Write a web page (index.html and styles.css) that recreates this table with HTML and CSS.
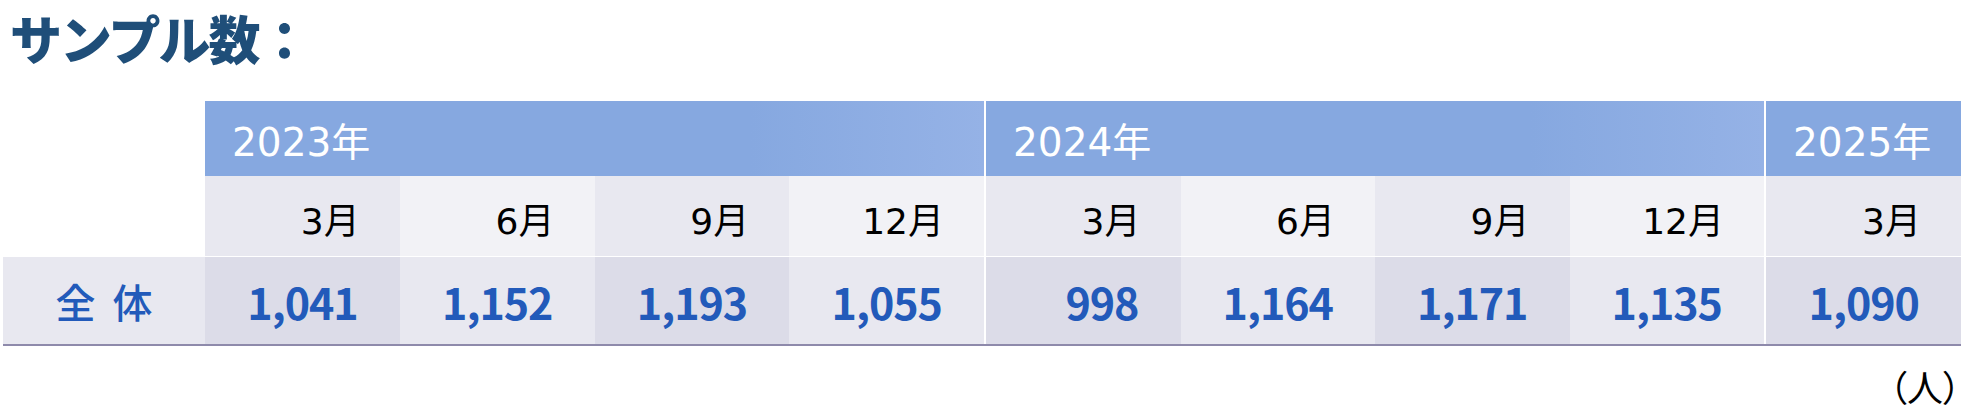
FILE: index.html
```html
<!DOCTYPE html>
<html lang="ja">
<head>
<meta charset="utf-8">
<link rel="stylesheet" href="styles.css">
</head>
<body>
<h1 class="title">サンプル数：</h1>
<div class="table">
  <div class="labelcol">
    <div class="spacer"></div>
    <div class="label">全 体</div>
  </div>
  <div class="group g2023">
    <div class="year">2023年</div>
    <div class="months">
      <div class="m a">3月</div><div class="m b">6月</div><div class="m a">9月</div><div class="m b">12月</div>
    </div>
    <div class="data">
      <div class="d a">1,041</div><div class="d b">1,152</div><div class="d a">1,193</div><div class="d b">1,055</div>
    </div>
  </div>
  <div class="group g2024">
    <div class="year">2024年</div>
    <div class="months">
      <div class="m a">3月</div><div class="m b">6月</div><div class="m a">9月</div><div class="m b">12月</div>
    </div>
    <div class="data">
      <div class="d a">998</div><div class="d b">1,164</div><div class="d a">1,171</div><div class="d b">1,135</div>
    </div>
  </div>
  <div class="group g2025">
    <div class="year plain">2025年</div>
    <div class="months">
      <div class="m a">3月</div>
    </div>
    <div class="data">
      <div class="d a">1,090</div>
    </div>
  </div>
</div>
<div class="unit">（人）</div>
</body>
</html>
```
FILE: styles.css
```css
html, body {
  margin: 0;
  padding: 0;
  background: #ffffff;
}
body {
  width: 1967px;
  height: 419px;
  overflow: hidden;
  font-family: "Noto Sans CJK JP", "Noto Sans", sans-serif;
}
.title {
  margin: 0;
  padding: 0 0 0 10px;
  height: 95px;
  box-sizing: border-box;
  font-size: 52px;
  line-height: 76px;
  font-weight: 900;
  letter-spacing: -2px;
  color: #1f4e79;
}
.table {
  display: flex;
  margin-top: 6px;
  margin-left: 3px;
  width: 1958px;
  border-bottom: 2px solid #8e8aab;
}
.labelcol {
  width: 202px;
  display: flex;
  flex-direction: column;
}
.spacer {
  height: 156px;
}
.label {
  height: 87px;
  background: #e8e8f0;
  color: #225aba;
  font-size: 40px;
  font-weight: 500;
  letter-spacing: 4px;
  display: flex;
  align-items: center;
  justify-content: center;
  padding-left: 4px;
}
.group {
  display: flex;
  flex-direction: column;
}
.g2023 { width: 779px; }
.g2024 { width: 778px; margin-left: 2px; }
.g2025 { width: 195px; margin-left: 2px; }
.year {
  height: 75px;
  box-sizing: border-box;
  padding-left: 27px;
  display: flex;
  align-items: center;
  color: #ffffff;
  font-family: "DejaVu Sans", "Noto Sans CJK JP", sans-serif;
  font-size: 39px;
  background: linear-gradient(to right, #86a8e0 0%, #86a8e0 70%, #95b2e6 100%);
}
.year.plain {
  background: #86a8e0;
}
.months, .data {
  display: flex;
}
.months {
  height: 80px;
  margin-bottom: 1px;
}
.data {
  height: 87px;
}
.m, .d {
  flex: 1 1 0;
  display: flex;
  align-items: center;
  justify-content: flex-end;
}
.m {
  padding-right: 40px;
  padding-top: 4px;
  box-sizing: border-box;
  font-family: "DejaVu Sans", "Noto Sans CJK JP", sans-serif;
  font-size: 36px;
  color: #000000;
}
.m.a { background: #e8e8f0; }
.m.b { background: #f2f2f6; }
.d {
  padding-right: 42px;
  font-size: 43px;
  font-weight: 700;
  letter-spacing: -1px;
  color: #225aba;
}
.d.a { background: #dcdce8; }
.d.b { background: #e8e8f0; }
.unit {
  display: flex;
  justify-content: flex-end;
  padding-right: 6px;
  font-size: 36px;
  line-height: 40px;
  margin-top: 20px;
  font-feature-settings: "palt";
  color: #000000;
}
```
